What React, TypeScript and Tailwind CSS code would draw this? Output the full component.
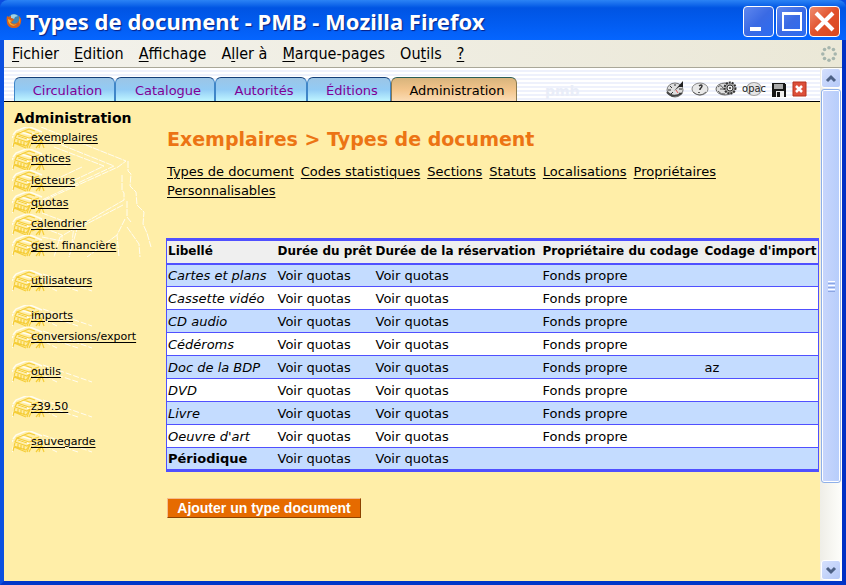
import React from "react";

const menu: [string, string, string][] = [
  ["", "F", "ichier"],
  ["", "E", "dition"],
  ["", "A", "ffichage"],
  ["A", "l", "ler à"],
  ["", "M", "arque-pages"],
  ["Ou", "t", "ils"],
  ["", "?", ""],
];

const sections = ["Types de document", "Codes statistiques", "Sections", "Statuts", "Localisations", "Propriétaires", "Personnalisables"];

const rows: [string, string, string][] = [
  ["Cartes et plans", "Fonds propre", ""],
  ["Cassette vidéo", "Fonds propre", ""],
  ["CD audio", "Fonds propre", ""],
  ["Cédéroms", "Fonds propre", ""],
  ["Doc de la BDP", "Fonds propre", "az"],
  ["DVD", "Fonds propre", ""],
  ["Livre", "Fonds propre", ""],
  ["Oeuvre d'art", "Fonds propre", ""],
  ["Périodique", "", ""],
];

function FirefoxLogo() {
  return (
    <svg className="h-4 w-4 shrink-0" viewBox="0 0 16 16" aria-hidden="true">
      <circle cx="8" cy="8" r="7" fill="#3d86b8" />
      <path d="M5 2q4-2 7 1l-3 1-1 2-3-1z" fill="#9fd2e6" />
      <path d="M1 3l2 1 2-1v2l3 1-1 2-2 1q2 3 6 1 3-2 2-7 3 3 2 6-1 6-7 6T1 10Q0 6 1 3z" fill="#d9601b" />
      <path d="M2 6l2 1 2 1-2 1q2 4 7 2-3 3-6 1T2 6zM13 5q2 3 0 6 1-3 0-6z" fill="#f5b335" />
    </svg>
  );
}

function Stack({ tail = false }: { tail?: boolean }) {
  return (
    <svg className="absolute left-2 top-0 -z-10 h-[22px] w-[88px]" viewBox="0 0 88 22" fill="none" aria-hidden="true">
      <path d="M1 8L4 4 14 0h4l12 5M1 9l-1 2M0 21l2-7M6 9l12 4M8 5l11 3" stroke="#fffdf0" strokeWidth="1.5" />
      <path d="M17 2L5 7l12 4 4-1M17 2l6 2M5 7l-2 4 12 4 3-2M3 12l-1 3 12 4 4-5M2 16l-1 4M2 16l12 5M12 4l8 3M6 9l9 3M9 14v4M6 13v4M12 15v4" stroke="#f5cd38" strokeWidth="1.2" />
      <path d="M18 13l-3 8M20 15l-3 6M20 17l9-4 3 8M24 21l5-6M27 21l2-6M21 10l8-1M21 8l6-2" stroke="#f5cd38" strokeWidth="1.2" />
      {tail && <path d="M30 9l36 12M31 4l49 17M33 15l12 6" stroke="#fffdf0" strokeDasharray="6 2" />}
    </svg>
  );
}

function NavGroup({ items, className, tail }: { items: string[]; className: string; tail?: boolean }) {
  return (
    <ul className={"grid auto-rows-fr " + className}>
      {items.map((item) => (
        <li key={item} className="relative flex items-center pl-[27px]">
          <Stack tail={tail} />
          <a href="#" className="underline underline-offset-2">{item}</a>
        </li>
      ))}
    </ul>
  );
}

function Temple() {
  return (
    <svg className="absolute left-2 top-0 -z-20 h-[130px] w-[142px]" viewBox="0 0 142 130" fill="none" stroke="#fffdf0" aria-hidden="true">
      <path
        d="M29 0l85 34-8 6-80 36M20 6l82 33-72 34M42 20l50 19-46 22M70 40l-36 17M27 29l28 10M116 34v10l3 3-1 12 6 6 1 13 7 7-1 12 4 9 4 14M110 48v15l2 3v7l-64 37-6 20M111 78l-46 24-8 28M115 74v16l4 5M113 92l-8 16 2 22M105 108l-30 22M115 100l12 17 1 13M30 86l32 12-2 18M30 92l-6 6 26 10v6L30 110"
        strokeDasharray="7 1"
      />
    </svg>
  );
}

function Tab({ label, className, active }: { label: string; className: string; active?: boolean }) {
  return (
    <a
      href="#"
      className={
        "flex h-6 items-center justify-center rounded-t-md border border-b-0 pl-[6px] pt-[2px] text-[13px] " +
        (active
          ? "border-t-[#2b5f58] border-x-[#8b7a50] bg-linear-to-b from-[#d8b47c] via-[#f2c48b] to-[#fbdcb4] text-black "
          : "border-x-[#3f86c8] border-t-[#143f78] bg-linear-to-b from-[#9cc5e6] via-[#92cbf5] to-[#bff5ff] text-[#800094] ") +
        className
      }
    >
      {label}
    </a>
  );
}

function Tools() {
  return (
    <div className="flex items-center gap-[5px]">
      <button aria-label="Tableau de bord">
        <svg className="block h-[18px] w-5" viewBox="0 0 20 18">
          <ellipse cx="10" cy="10" rx="8" ry="7" fill="#ddd" stroke="#777" />
          <path d="M2 12q6 7 15 1" fill="none" stroke="#444" strokeWidth="2" />
          <path d="M10 4v2M5 6l2 2M3 10h3M6 14l2-2M14 13l2 1M14 9h3" stroke="#333" />
          <path d="M9 11l9-10v6h-4z" fill="#222" />
          <path d="M11 10l2 3" stroke="#d55" />
        </svg>
      </button>
      <button aria-label="Aide">
        <svg className="block h-[18px] w-5" viewBox="0 0 20 18">
          <ellipse cx="10" cy="9" rx="8" ry="6" fill="#e8e8e8" stroke="#888" />
          <path d="M3 12q7 6 13 0" fill="none" stroke="#666" />
          <path d="M9 6q3-2 3 0 0 1-2 3v1M9 12v1" fill="none" stroke="#333" strokeWidth="1.5" />
        </svg>
      </button>
      <button aria-label="Paramètres">
        <svg className="block h-[18px] w-[22px]" viewBox="0 0 22 18">
          <ellipse cx="10" cy="9" rx="9" ry="6" fill="#ddd" stroke="#666" />
          <path d="M3 7q3-3 5 1M3 11q3 4 7 3M5 9h4" fill="none" stroke="#555" />
          <circle cx="15" cy="8" r="5.5" fill="#aaa" stroke="#333" strokeWidth="2" strokeDasharray="2 1" />
          <circle cx="15" cy="8" r="3" fill="#eee" stroke="#333" />
          <circle cx="15" cy="8" r="1" fill="#333" />
        </svg>
      </button>
      <button className="relative flex h-[18px] w-6 items-center justify-center">
        <span className="absolute left-1 top-[2px] h-[14px] w-4 rounded-[50%] border border-neutral-400 bg-neutral-200" />
        <span className="relative font-['DejaVu_Sans_Condensed','DejaVu_Sans',sans-serif] text-[11px] leading-3 text-neutral-800">opac</span>
      </button>
      <button aria-label="Sauvegarde">
        <svg className="block h-[18px] w-4" viewBox="0 0 16 18" shapeRendering="crispEdges">
          <path d="M1 3h12l2 2v12H1z" fill="#161616" />
          <path d="M3 4h9v5H3z" fill="#aaa" />
          <path d="M5 11h8v6H5z" fill="#eee" />
          <path d="M6 12h3v5H6z" fill="#161616" />
        </svg>
      </button>
      <button aria-label="Quitter">
        <svg className="block h-[18px] w-4" viewBox="0 0 16 18">
          <path d="M1 2h13v14H1z" fill="#dc4f39" stroke="#b8321d" />
          <path d="M4 6l6 6M10 6l-6 6" stroke="white" strokeWidth="2.5" />
        </svg>
      </button>
    </div>
  );
}

function WindowButton({ kind }: { kind: "Réduire" | "Agrandir" | "Fermer" }) {
  return (
    <button
      aria-label={kind}
      className={
        "h-[31px] w-[31px] rounded-[4px] border border-white bg-linear-to-br " +
        (kind === "Fermer" ? "from-[#ee8a6b] via-[#e1512b] to-[#d9481f]" : "from-[#5f87ee] via-[#3a6ae4] to-[#2a6cf2]")
      }
    >
      <svg className="block h-[29px] w-[29px]" viewBox="0 0 29 29" fill="none" stroke="white" aria-hidden="true">
        {kind === "Réduire" && <path d="M6 22h11" strokeWidth="4" />}
        {kind === "Agrandir" && <path d="M6 6h18v17H6zM5 7h20" strokeWidth="2" />}
        {kind === "Fermer" && <path d="M6 6l17 17M23 6L6 23" strokeWidth="4" />}
      </svg>
    </button>
  );
}

function ScrollButton({ down = false }: { down?: boolean }) {
  return (
    <button aria-label={down ? "Défiler vers le bas" : "Défiler vers le haut"} className="h-5 w-full shrink-0 rounded-[3px] border border-white bg-linear-to-br from-[#d5e0fd] to-[#b5c9f8]">
      <svg className="mx-auto block h-4 w-4" viewBox="0 0 16 16" fill="none" stroke="#4d6185" strokeWidth="3" aria-hidden="true">
        <path d={down ? "M4 6l4 4 4-4" : "M4 11l4-4 4 4"} />
      </svg>
    </button>
  );
}

export default function App() {
  return (
    <div className="flex min-h-screen flex-col bg-[#0a4de0] font-['DejaVu_Sans',Verdana,sans-serif] text-[13px] text-black">
      <header className="flex h-10 shrink-0 items-center rounded-t-lg bg-linear-to-b from-[#2b83f5] via-[#0054e3] via-20% to-[#0565ff] px-[6px] pt-px">
        <FirefoxLogo />
        <h1 className="grow whitespace-nowrap pl-1 font-['Noto_Sans',sans-serif] text-[22px] font-bold leading-8 text-white [text-shadow:1px_1px_1px_#0a1f80]">
          Types de document - PMB - Mozilla Firefox
        </h1>
        <div className="flex gap-[2px] pt-[2px]">
          <WindowButton kind="Réduire" />
          <WindowButton kind="Agrandir" />
          <WindowButton kind="Fermer" />
        </div>
      </header>
      <div className="flex grow flex-col border-b-4 border-l-4 border-r-4 border-b-[#0036c8] border-l-[#0b50e0] border-r-[#0030c4]">
        <nav className="flex h-7 shrink-0 items-center gap-[15px] border-b border-[#a9a798] bg-linear-to-r from-[#f3f2ec] to-[#ebe8d7] pl-2 pr-1 font-['DejaVu_Sans_Condensed','DejaVu_Sans',sans-serif] text-base">
          {menu.map(([before, key, after]) => (
            <button key={before + key + after} className="whitespace-nowrap">
              {before}
              <span className="underline underline-offset-2">{key}</span>
              {after}
            </button>
          ))}
          <svg className="ml-auto h-4 w-[18px]" viewBox="0 0 18 18" fill="#a6b5ad" aria-hidden="true">
            <circle cx="9" cy="2" r="2" />
            <circle cx="14" cy="4" r="2" />
            <circle cx="16" cy="9" r="2" />
            <circle cx="14" cy="14" r="2" />
            <circle cx="9" cy="16" r="2" />
            <circle cx="4" cy="14" r="2" />
            <circle cx="2" cy="9" r="2" />
            <circle cx="4" cy="4" r="2" />
          </svg>
        </nav>
        <div className="flex grow">
          <div className="flex min-w-0 grow flex-col bg-[#ffeea8]">
            <div className="flex h-[34px] items-end border-b border-black bg-[repeating-linear-gradient(#ffffff_0px_2px,#eef1fc_2px_4px)] pl-[10px]">
              <Tab label="Circulation" className="w-[101px]" />
              <Tab label="Catalogue" className="w-[100px]" />
              <Tab label="Autorités" className="w-[92px]" />
              <Tab label="Éditions" className="w-[84px]" />
              <Tab label="Administration" className="w-[126px]" active />
              <span className="pl-7 text-sm font-bold leading-5 text-[#e9edf8]">pmb</span>
              <div className="ml-auto pb-[3px] pr-3">
                <Tools />
              </div>
            </div>
            <div className="flex">
              <aside className="isolate w-[162px] shrink-0 pl-2 pt-[7px] text-[11px]">
                <h2 className="pl-[2px] text-sm font-bold leading-[18px]">Administration</h2>
                <nav className="relative -ml-2 flex flex-col gap-[13px]">
                  <Temple />
                  <NavGroup className="h-[130px]" items={["exemplaires", "notices", "lecteurs", "quotas", "calendrier", "gest. financière"]} />
                  <NavGroup className="h-[22px]" items={["utilisateurs"]} tail />
                  <NavGroup className="h-[43px]" items={["imports", "conversions/export"]} tail />
                  <NavGroup className="h-[22px]" items={["outils"]} tail />
                  <NavGroup className="h-[22px]" items={["z39.50"]} tail />
                  <NavGroup className="h-[22px]" items={["sauvegarde"]} tail />
                </nav>
              </aside>
              <main className="min-w-0 grow pr-px pt-6">
                <h2 className="pl-px text-[19px] font-bold leading-[26px] text-[#ec7414]">Exemplaires &gt; Types de document</h2>
                <div className="flex flex-wrap gap-x-[7px] pl-px pr-20 pt-[10px] leading-[19px]">
                  {sections.map((s) => (
                    <a key={s} href="#" className="underline underline-offset-2">{s}</a>
                  ))}
                </div>
                <table className="mt-[38px] w-full border-collapse border-x border-y-[3px] border-[#5050ff] leading-4">
                  <thead className="border-b-2 border-[#5050ff] bg-[#efefef] text-left text-xs">
                    <tr className="h-6">
                      <th className="w-[111px] pb-px pl-px">Libellé</th>
                      <th className="w-[98px] pb-px">Durée du prêt</th>
                      <th className="w-[167px] pb-px">Durée de la réservation</th>
                      <th className="w-[162px] pb-px">Propriétaire du codage</th>
                      <th className="whitespace-nowrap pb-px">Codage d'import</th>
                    </tr>
                  </thead>
                  <tbody>
                    {rows.map(([name, owner, code]) => (
                      <tr key={name} className="h-[23px] border-t border-[#5050ff] odd:bg-[#c4dcff] even:bg-white">
                        <td className={owner ? "pl-px pt-px italic" : "pl-px pt-px font-bold"}>{name}</td>
                        <td className="pt-px">Voir quotas</td>
                        <td className="pt-px">Voir quotas</td>
                        <td className="pt-px">{owner}</td>
                        <td className="pt-px">{code}</td>
                      </tr>
                    ))}
                  </tbody>
                </table>
                <button className="ml-px mt-[26px] h-5 w-[194px] border border-b-[#8c4200] border-l-[#f5bd8e] border-r-[#8c4200] border-t-[#f5bd8e] bg-[#e66b00] font-['Liberation_Sans',Arial,sans-serif] text-sm font-bold leading-4 text-white">
                  Ajouter un type document
                </button>
              </main>
            </div>
          </div>
          <div className="flex w-[22px] shrink-0 flex-col bg-linear-to-r from-[#efeee7] to-[#fefefb] px-px pb-px">
            <ScrollButton />
            <div className="mt-px flex h-[394px] flex-col items-center justify-center gap-px rounded-[3px] border border-[#8fb0e8] bg-linear-to-r from-[#c9d6fc] to-[#b6cdfb] ring-1 ring-inset ring-white">
              <span className="h-px w-[7px] bg-white" />
              <span className="h-px w-[7px] bg-[#8ca6e4]" />
              <span className="h-px w-[7px] bg-white" />
              <span className="h-px w-[7px] bg-[#8ca6e4]" />
              <span className="h-px w-[7px] bg-white" />
              <span className="h-px w-[7px] bg-[#8ca6e4]" />
            </div>
            <div className="grow" />
            <ScrollButton down />
          </div>
        </div>
      </div>
    </div>
  );
}
